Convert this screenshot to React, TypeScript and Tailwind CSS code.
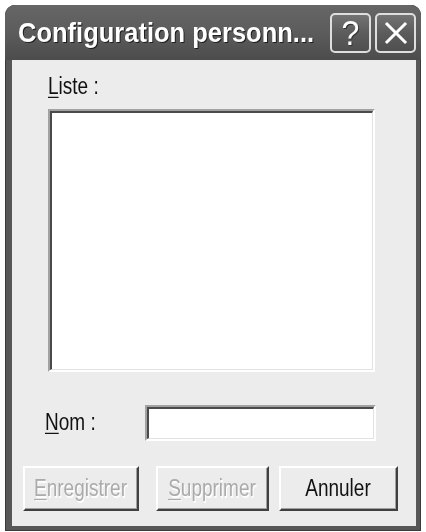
import React from "react";

const ui = { fontFamily: '"Liberation Sans", Arial, sans-serif' };

function Mnemonic({ first, rest }: { first: string; rest: string }) {
  return (
    <>
      <span className="underline underline-offset-[2px] decoration-1">{first}</span>
      {rest}
    </>
  );
}

function PushButton({
  width,
  disabled,
  children,
}: {
  width: string;
  disabled?: boolean;
  children: React.ReactNode;
}) {
  return (
    <div
      className={`${width} h-[45px] border-t-2 border-l-2 border-t-white border-l-white border-b-2 border-r-2 border-b-[#404040] border-r-[#404040] bg-[#ececec]`}
    >
      <div className="h-full w-full border-b border-r border-b-[#a0a0a0] border-r-[#a0a0a0] flex items-center justify-center">
        <span
          className={`inline-block scale-y-[1.22] text-[19px] leading-none ${
            disabled ? "text-[#ababab] [text-shadow:1px_1px_0_#ffffff]" : "text-[#111]"
          }`}
        >
          {children}
        </span>
      </div>
    </div>
  );
}

function Sunken({ className, children }: { className: string; children?: React.ReactNode }) {
  return (
    <div
      className={`${className} border-t-2 border-l-2 border-t-[#a2a2a2] border-l-[#a2a2a2] border-b-2 border-r-2 border-b-white border-r-white`}
    >
      <div className="h-full w-full border-t-2 border-l-2 border-t-[#4a4a4a] border-l-[#4a4a4a] border-b border-r border-b-[#e2e2e2] border-r-[#e2e2e2] bg-white">
        {children}
      </div>
    </div>
  );
}

function CaptionButton({ children }: { children: React.ReactNode }) {
  return (
    <div className="w-[41px] h-[40px] rounded-[5px] border-2 border-[#dedede] bg-gradient-to-b from-[#737373] via-[#5c5c5c] to-[#4f4f4f] flex items-center justify-center">
      {children}
    </div>
  );
}

export default function App() {
  return (
    <div className="w-[426px] h-[532px] bg-white overflow-hidden pt-[5px] pl-[5px]" style={ui}>
      <div className="w-[416px] h-[526px] flex flex-col rounded-t-[10px] bg-[#575757] shadow-[inset_0_0_0_1px_#3a3a3a] overflow-hidden">
        {/* caption bar */}
        <div className="h-[55px] shrink-0 flex items-center pl-[13px] pr-[5px] bg-gradient-to-b from-[#666666] via-[#5c5c5c] to-[#4c4c4c] rounded-t-[10px]">
          <div className="flex-1 whitespace-nowrap pt-[2px]">
            <span className="inline-block origin-left scale-x-[1.02] scale-y-[1.14] text-white font-bold text-[25px] leading-none [text-shadow:1px_1px_0_#1e1e1e]">
              Configuration personn...
            </span>
          </div>
          <div className="flex gap-[4px] items-center pt-[1px]">
            <CaptionButton>
              <span
                className="inline-block scale-y-[1.1] text-white text-[32px] leading-none [text-shadow:1px_1px_0_#333]"
                style={{ fontFamily: '"Liberation Sans", Arial, sans-serif' }}
              >
                ?
              </span>
            </CaptionButton>
            <CaptionButton>
              <svg width="26" height="26" viewBox="0 0 26 26">
                <path d="M4 4 L22 22 M22 4 L4 22" stroke="#ffffff" strokeWidth="3" strokeLinecap="square" />
              </svg>
            </CaptionButton>
          </div>
        </div>

        {/* dialog client area */}
        <div className="flex-1 ml-[7px] mr-[5px] mb-[5px] bg-[#ececec] flex flex-col">
          <div className="pl-[36px] pt-[16px] text-[19px] leading-[22px] text-[#111]">
            <span className="inline-block scale-y-[1.22]">
              <Mnemonic first="L" rest="iste :" />
            </span>
          </div>
          <Sunken className="ml-[36px] mt-[11px] w-[327px] h-[263px]" />

          <div className="mt-[33px] flex items-center pl-[33px]">
            <div className="w-[100px] text-[19px] leading-[22px] text-[#111]">
              <span className="inline-block scale-y-[1.22]">
                <Mnemonic first="N" rest="om :" />
              </span>
            </div>
            <Sunken className="w-[231px] h-[36px]" />
          </div>

          <div className="mt-[25px] flex pl-[11px]">
            <PushButton width="w-[116px]" disabled>
              <Mnemonic first="E" rest="nregistrer" />
            </PushButton>
            <div className="w-[17px]" />
            <PushButton width="w-[113px]" disabled>
              <Mnemonic first="S" rest="upprimer" />
            </PushButton>
            <div className="w-[10px]" />
            <PushButton width="w-[119px]">Annuler</PushButton>
          </div>
        </div>
      </div>
    </div>
  );
}
